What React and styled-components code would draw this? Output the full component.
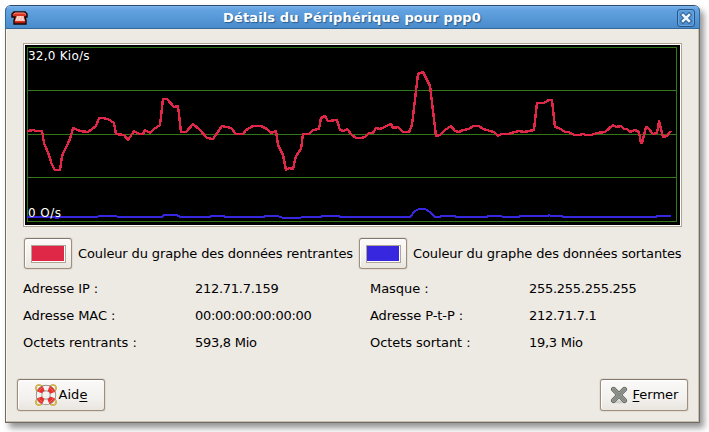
import React from "react";
import styled, { createGlobalStyle } from "styled-components";

const GlobalStyle = createGlobalStyle`
  body {
    margin: 0;
    background: #fff;
    overflow: hidden;
    font-family: "DejaVu Sans", sans-serif;
    font-size: 13px;
    line-height: 16px;
    color: #000;
  }
  * { box-sizing: border-box; }
`;

const Desktop = styled.div`
  width: 709px;
  height: 432px;
  padding: 5px 9px 9px 5px;
`;

const Window = styled.main`
  width: 695px;
  height: 418px;
  display: flex;
  flex-direction: column;
  background: #ede9e3;
  border: 1px solid #716b60;
  border-top-color: #2c4c6f;
  border-radius: 6px 6px 0 0;
  box-shadow: inset -1px -1px #c5bdb1, inset 1px 0 #f8f6f3, 4px 5px 6px rgba(0, 0, 0, 0.42);
`;

const TitleBar = styled.header`
  height: 23px;
  flex: none;
  display: grid;
  grid-template-columns: 22px 1fr 22px;
  align-items: center;
  padding: 0 4px 0 5px;
  margin: 0 -1px;
  background: linear-gradient(#70ade8, #62a2e1 15%, #498bcb);
  border: 1px solid #34699e;
  border-top-color: #79b2e8;
  border-radius: 5px 5px 0 0;
`;

const Title = styled.h1`
  margin: 0;
  text-align: center;
  font-size: 13px;
  line-height: 20px;
  font-weight: bold;
  color: #fff;
  white-space: nowrap;
  text-shadow: 1px 1px 1px #285b8e;
  letter-spacing: 0.13px;
  transform: translateX(-1px);
`;

const CloseButton = styled.button`
  width: 18px;
  height: 18px;
  padding: 0;
  display: grid;
  place-items: center;
  justify-self: end;
  border: 1px solid #285583;
  border-radius: 3px;
  background: linear-gradient(#5b9ddd, #498bcb);
  box-shadow: inset 0 0 0 1px #68a6e2;
`;

const Content = styled.div`
  flex: 1;
  display: flex;
  flex-direction: column;
  padding: 14px 11px 11px;
`;

const GraphFrame = styled.div`
  width: 659px;
  height: 184px;
  margin-left: 6px;
  border: 1px solid #b0a595;
  padding: 1px;
  background: #fff;
  svg { display: block; }
`;

const ColorRow = styled.div`
  display: flex;
  align-items: center;
  margin: 11px 0 0 7px;
  height: 31px;
`;

const ColorChoice = styled.label`
  display: flex;
  align-items: center;
  gap: 6px;
  width: 335px;
  flex: none;
  white-space: nowrap;
  letter-spacing: -0.125px;
`;

const Button = styled.button`
  height: ${(p) => p.$height}px;
  width: ${(p) => p.$width}px;
  padding: 0;
  flex: none;
  display: flex;
  align-items: center;
  justify-content: center;
  gap: ${(p) => p.$gap || 0}px;
  font: inherit;
  color: inherit;
  border: 1px solid #9c8f7e;
  border-top-color: #81776a;
  border-radius: 3px;
  background: linear-gradient(#fbfaf8, #f3f1ee 60%, #e9e5df);
  box-shadow: inset 1px 1px #fff, 0 0 0 1px rgba(190, 179, 164, 0.25);
`;

const Swatch = styled.span`
  width: 35px;
  height: 18px;
  border: 1px solid #b0a595;
  background: ${(p) => p.$color};
  box-shadow: inset -1px -1px #fff;
`;

const Details = styled.dl`
  display: grid;
  grid-template-columns: 172px 175px 159px 1fr;
  grid-auto-rows: 27px;
  align-items: center;
  margin: 6px 0 0 6px;
  white-space: nowrap;
`;

const Term = styled.dt`
  letter-spacing: -0.06px;
`;

const Value = styled.dd`
  margin: 0;
  letter-spacing: -0.27px;
`;

const Actions = styled.footer`
  display: flex;
  justify-content: space-between;
  margin-top: auto;
`;

const Mnemonic = styled.span`
  text-decoration: underline;
  text-underline-offset: 2px;
  text-decoration-thickness: 1px;
`;

const INCOMING = "27,131 34,130 35,131 42,131 44,143 49,155 52,165 55,170 60,170 62,156 70,139 73,128 80,131 88,132 96,126 99,118 102,118 108,119 114,123 116,134 124,135 128,140 134,131 139,134 143,134 145,130 150,133 154,129 160,125 163,99 167,99 174,107 178,106 181,132 186,132 193,124 200,130 207,138 213,139 222,126 231,128 236,134 243,134 246,130 253,126 261,126 267,129 271,133 276,131 278,145 283,155 286,170 289,168 293,169 296,156 301,149 303,134 309,134 313,130 319,129 321,118 325,116 328,121 337,120 340,130 344,131 347,129 352,135 356,138 361,138 365,137 369,133 373,133 376,128 380,129 391,124 393,128 398,127 403,132 409,132 412,125 418,74 423,72 430,86 436,136 440,135 445,130 451,126 455,131 459,132 463,130 469,129 473,126 479,126 483,129 494,132 498,136 501,134 508,134 515,132 519,131 524,132 534,130 537,103 544,103 549,100 552,100 555,127 559,128 565,132 569,132 574,135 579,135 583,134 586,135 591,135 597,133 605,132 613,125 616,127 621,126 624,129 627,129 630,132 635,130 639,132 641,143 642,143 646,127 648,128 653,134 657,133 659,121 663,137 667,136 671,131";

const OUTGOING = "27,217 54,217 56,218 62,217 97,217 99,216 116,216 118,217 162,217 164,215 177,215 180,217 210,217 211,216 224,216 225,217 264,217 265,216 278,216 283,218 300,218 302,217 321,217 322,216 339,216 340,217 410,217 415,211 419,209 425,209 430,212 435,217 440,217 441,216 455,216 456,217 487,217 488,216 501,216 503,217 519,217 520,216 548,216 549,215 551,216 562,216 563,217 656,217 657,216 671,216";

function TrafficGraph() {
  return (
    <GraphFrame>
      <svg width="655" height="180" viewBox="25 45 655 180" role="img" aria-label="Trafic">
        <rect x="25" y="45" width="655" height="180" fill="#000" />
        <g fill="none" stroke="#32781a" shapeRendering="crispEdges">
          <rect x="27.5" y="47.5" width="649" height="174" />
          <path d="M28 90.5H676M28 134.5H676M28 177.5H676" />
        </g>
        <g fill="none" strokeLinejoin="round" shapeRendering="crispEdges">
          <polyline points={INCOMING} stroke="#df2847" strokeWidth="2.4" />
          <polyline points={OUTGOING} stroke="#3728df" strokeWidth="2" />
        </g>
        <g fill="#fff" fontFamily="DejaVu Sans, sans-serif" fontSize="12">
          <text x="28" y="60" textLength="61.5">32,0 Kio/s</text>
          <text x="28" y="217" textLength="33">0 O/s</text>
        </g>
      </svg>
    </GraphFrame>
  );
}

function PhoneIcon() {
  return (
    <svg width="18" height="14" viewBox="0 0 18 14">
      <path d="M3 1h11l2 2v3h-2l1 3v4H3V9l1-3H1V3z" fill="#d83624" stroke="#160503" strokeWidth="1.4" />
      <path d="M2.5 3.3 4 2h9l2 1.3" fill="none" stroke="#ff9181" />
      <path d="M6 5h6l2 5H4z" fill="#f6c3b9" />
      <path d="M6 6h1m2 0h1m2 0h1M5 8h1m2 0h1m2 0h1" stroke="#fff" />
      <path d="M4 11.5h10" stroke="#b31b12" />
    </svg>
  );
}

function CloseGlyph() {
  return (
    <svg width="12" height="12" viewBox="0 0 12 12">
      <path d="m3 3 6 6m0-6L3 9" stroke="#265685" strokeWidth="4.4" strokeLinecap="square" />
      <path d="m3 3 6 6m0-6L3 9" stroke="#edf6ff" strokeWidth="2.6" strokeLinecap="square" />
    </svg>
  );
}

function HelpIcon() {
  return (
    <svg width="22" height="22" viewBox="0 0 22 22" fill="none">
      {[[4, 4], [18, 4], [4, 18], [18, 18]].map(([x, y]) => (
        <g key={`${x}-${y}`}>
          <circle cx={x} cy={y} r="3" stroke="#b39225" strokeWidth="1.6" />
          <circle cx={x} cy={y} r="3" stroke="#f2d55d" strokeWidth=".7" />
        </g>
      ))}
      <circle cx="11" cy="11" r="7" stroke="#77766f" strokeWidth="6.4" />
      <circle cx="11" cy="11" r="7" stroke="#f1f1ee" strokeWidth="5" />
      <circle cx="11" cy="11" r="7" stroke="#e92f2c" strokeWidth="5.2" strokeDasharray="6 4.996" strokeDashoffset="-2.5" />
      <circle cx="11" cy="11" r="8" stroke="#fff" strokeOpacity=".25" />
    </svg>
  );
}

function CrossIcon() {
  return (
    <svg width="18" height="18" viewBox="0 0 18 18">
      <ellipse cx="9" cy="16" rx="8" ry="1.5" fill="#000" opacity=".12" />
      <path d="M3.5 3.3 14.5 14.5M14.5 3.3 3.5 14.5" stroke="#5b605a" strokeWidth="5" strokeLinecap="round" />
      <path d="M3.5 3.3 14.5 14.5M14.5 3.3 3.5 14.5" stroke="#a0a49e" strokeWidth="3.4" strokeLinecap="round" />
      <path d="M3.5 3.3 14.5 14.5M14.5 3.3 3.5 14.5" stroke="#858a83" strokeWidth="2" strokeLinecap="round" />
    </svg>
  );
}

function ColorPicker({ color, children }) {
  return (
    <ColorChoice>
      <Button $width={48} $height={31}><Swatch $color={color} /></Button>
      {children}
    </ColorChoice>
  );
}

export default function App() {
  return (
    <Desktop>
      <GlobalStyle />
      <Window>
        <TitleBar>
          <PhoneIcon />
          <Title>Détails du Périphérique pour ppp0</Title>
          <CloseButton aria-label="Fermer"><CloseGlyph /></CloseButton>
        </TitleBar>
        <Content>
          <TrafficGraph />
          <ColorRow>
            <ColorPicker color="#df2847">Couleur du graphe des données rentrantes</ColorPicker>
            <ColorPicker color="#3728df">Couleur du graphe des données sortantes</ColorPicker>
          </ColorRow>
          <Details>
            <Term>Adresse IP :</Term><Value>212.71.7.159</Value>
            <Term>Masque :</Term><Value>255.255.255.255</Value>
            <Term>Adresse MAC :</Term><Value>00:00:00:00:00:00</Value>
            <Term>Adresse P-t-P :</Term><Value>212.71.7.1</Value>
            <Term>Octets rentrants :</Term><Value>593,8 Mio</Value>
            <Term>Octets sortant :</Term><Value>19,3 Mio</Value>
          </Details>
          <Actions>
            <Button $width={88} $height={32} $gap={2}><HelpIcon /><span>Aid<Mnemonic>e</Mnemonic></span></Button>
            <Button $width={88} $height={32} $gap={5}><CrossIcon /><span><Mnemonic>F</Mnemonic>ermer</span></Button>
          </Actions>
        </Content>
      </Window>
    </Desktop>
  );
}
